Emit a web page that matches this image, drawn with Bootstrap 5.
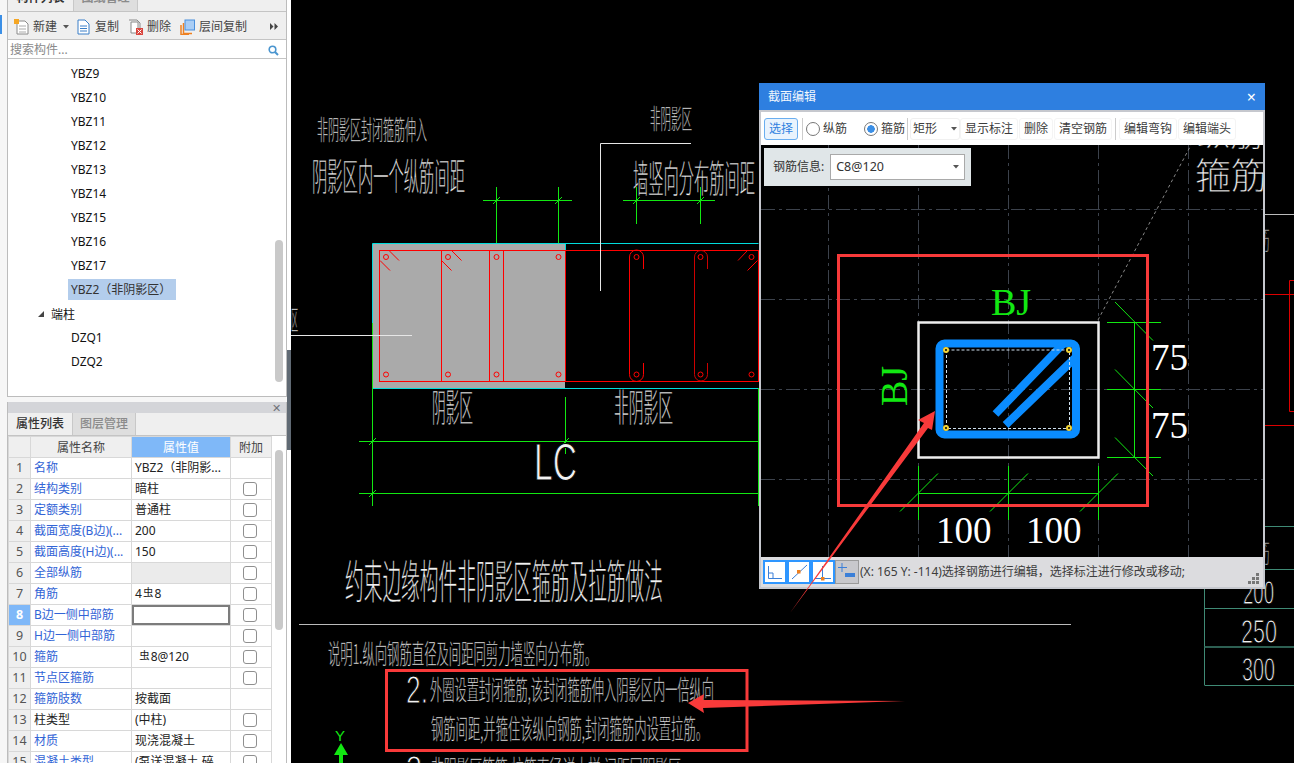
<!DOCTYPE html>
<html lang="zh-CN">
<head>
  <meta charset="UTF-8" />
  <meta name="viewport" content="width=device-width, initial-scale=1" />
  <title>截面编辑</title>
  <link href="https://cdn.jsdelivr.net/npm/bootstrap@5.3.2/dist/css/bootstrap.min.css" rel="stylesheet" />
  <style>
    html, body { height: 763px; overflow: hidden; }
    body { background: #000; font-family: "Noto Sans", "Noto Sans CJK SC", sans-serif; font-size: 12px; color: #222; }
    .app-shell { width: 1294px; height: 763px; position: relative; overflow: hidden; }
    .side-bar { width: 291px; height: 763px; flex: none; background: #f6f6f6; padding-left: 7px; position: relative; }
    .edge-mark { position: absolute; left: 0; top: 15px; width: 2px; height: 19px; background: #3b8fe6; }
    .side-inner { width: 280px; flex: none; }
    .split-bar { width: 4px; flex: none; background: #fff; position: relative; }
    .split-bar::after { content: ""; position: absolute; left: 0; top: 350px; width: 4px; height: 100px; background: #606a74; }

    .panel-top { height: 397px; border: 1px solid #bcbcbc; border-top: 0; background: #fff; }
    .tab-strip { height: 12px; overflow: hidden; background: #efefef; border-bottom: 1px solid #c4c4c4; align-items: flex-end; }
    .tab-item { width: 65px; height: 22px; flex: none; line-height: 18px; text-align: center; font-weight: 700; color: #333; background: #efefef; }
    .tab-item.off { background: #dedede; color: #8b8b8b; border-left: 1px solid #c8c8c8; border-right: 1px solid #c8c8c8; }
    .tool-strip { height: 28px; background: #efefef; border-bottom: 1px solid #c4c4c4; padding: 2px 0 0 6px; color: #444; }
    .tool-strip svg { flex: none; }
    .tool-strip .gap-a { margin-left: 4px; }
    .tool-strip .gap-b { margin-left: 9px; }
    .tool-strip .gap-c { margin-left: 6px; }
    .tool-strip .gap-d { margin-left: 8px; }
    .tool-strip .gap-e { margin-left: 5px; }
    .search-row { height: 19px; border-bottom: 1px solid #c4c4c4; padding: 2px 7px 0 2px; color: #8a8a8a; }
    .tree-box { position: relative; height: 337px; padding-top: 3px; }
    .tree-row { height: 24px; line-height: 24px; padding-left: 60px; color: #111; }
    .tree-row.group { padding-left: 30px; display: flex; align-items: center; }
    .tree-row span { display: inline-block; height: 21px; line-height: 21px; padding: 0 3px; }
    .tree-row.picked span { background: #b3cdec; color: #333; padding-right: 5px; }
    .tree-row .tree-arrow { width: 0; height: 0; padding: 0; border-style: solid; border-width: 0 0 6px 6px; border-color: transparent transparent #444 transparent; margin-right: 4px; }
    .scroll-thumb { position: absolute; width: 8px; background: #c9c9c9; border-radius: 4px; }

    .panel-bottom { height: 361px; margin-top: 5px; border-left: 1px solid #bcbcbc; border-right: 1px solid #bcbcbc; background: #fff; overflow: hidden; position: relative; }
    .grip-bar { height: 11px; background: #d4d5d9; padding-right: 5px; color: #6f7278; font-size: 11px; line-height: 11px; }
    .prop-tabs { height: 23px; background: #efefef; border-bottom: 1px solid #c4c4c4; }
    .prop-tabs .tab-item { height: 22px; line-height: 22px; width: 64px; font-weight: 500; }
    .prop-table { width: 263px; table-layout: fixed; margin: 0; border-collapse: collapse; }
    .prop-table th, .prop-table td { height: 21px; padding: 0 3px; line-height: 19px; font-size: 12px; font-weight: 400; border: 1px solid #d8d8d8; white-space: nowrap; overflow: hidden; color: #222; background: #fff; box-shadow: none; }
    .prop-table th { background: #efefef; text-align: center; color: #444; }
    .prop-table th.hot { background: #7fb8f8; color: #fff; }
    .prop-table .idx { background: #efefef; color: #555; text-align: center; padding: 0; font-size: 12.5px; }
    .prop-table .idx.hot { background: #7fb8f8; color: #fff; font-weight: 700; }
    .prop-table .nm { color: #3264d6; }
    .prop-table .nm.plain { color: #222; }
    .prop-table .val.muted-cell { background: #ebebeb; }
    .prop-table .val.sel-cell { box-shadow: inset 0 0 0 2px #7c7c7c; }
    .prop-table .chk { text-align: center; padding: 0 2px 0 0; }
    .tiny-check { width: 14px; height: 14px; margin: 3px 0 0; border: 1px solid #8f8f8f; border-radius: 2px; float: none; }
    .bar-mark { font-size: 10.5px; position: relative; top: -2px; margin: 0 1px; }

    .cad-view { position: absolute; left: 291px; top: 0; }
    .cad-t { fill: #f2f2f2; font-family: "Noto Sans CJK SC", sans-serif; font-weight: 300; stroke: #000; stroke-width: .35; }
    .cad-n { fill: #f2f2f2; font-family: "Liberation Sans", sans-serif; stroke: #000; stroke-width: 1.1; }
    .dim-t { font-family: "Liberation Serif", serif; }

    .edit-win { position: absolute; left: 759px; top: 83px; width: 506px; height: 506px; background: #c6c8ce; padding: 0 2px 2px 2px; }
    .win-title { height: 27px; flex: none; margin: 0 -2px; background: #2e7fe0; color: #f2f7fd; padding: 1px 9px 0; font-size: 12px; }
    .win-close { color: #fff; font-size: 16px; line-height: 1; }
    .win-tools { height: 33px; flex: none; margin-top: 2px; background: #fff; padding: 1px 0 0 3px; color: #3c3c3c; }
    .tool-pick { height: 22px; width: 34px; padding: 0; font-size: 12px; line-height: 20px; color: #2e7fe0; background: #e9f3fd; border: 1px solid #6aaef0; border-radius: 3px; }
    .tool-plain { height: 22px; padding: 0 4px; font-size: 12px; line-height: 20px; color: #3c3c3c; border: 1px solid #f4f4f4; border-radius: 3px; background: #fff; }
    .tool-sep { width: 1px; height: 22px; background: #ccc; flex: none; }
    .tool-radio { width: 14px; height: 14px; margin: 0 3px 0 0; border-color: #777; float: none; flex: none; }
    .tool-radio:checked { background-color: #fff; border-color: #777; background-image: radial-gradient(circle, #3b8fe6 0 3.5px, transparent 4px); }
    .form-select.shape-pick, .form-select.rebar-pick { background-image: url("data:image/svg+xml,%3csvg xmlns='http://www.w3.org/2000/svg' viewBox='0 0 6 4'%3e%3cpath d='M0 0h6L3 3.500z' fill='%23555'/%3e%3c/svg%3e"); background-size: 6px 4px; }
    .shape-pick { width: 50px; height: 22px; flex: none; padding: 0 0 0 2px; font-size: 12px; border: 1px solid #f0f0f0; background-position: right 2px center; color: #3c3c3c; border-radius: 3px; }
    .win-canvas { position: relative; height: 412px; flex: none; background: #000; overflow: hidden; }
    .win-canvas svg { display: block; }
    .rebar-box { position: absolute; left: 3px; top: 3px; width: 207px; height: 38px; background: #e0e6e8; padding-left: 9px; color: #333; }
    .rebar-pick { width: 135px; height: 26px; margin-left: 6px; padding: 0 0 0 5px; border: 1px solid #a9a9a9; border-radius: 0; font-size: 12.5px; background-position: right 5px center; color: #333; }
    .win-status { height: 30px; flex: none; background: #dcdcdf; padding-left: 2px; color: #3d3d3d; position: relative; white-space: nowrap; }
    .stat-btn { width: 24px; height: 24px; background: #fff; border: 2px solid #2e96ff; flex: none; display: flex; }
    .stat-btn.off { background: #c8c8cc; border: 1px solid #9a9a9a; }
    .grip-dots { position: absolute; right: 3px; bottom: 2px; }
    .mark-layer { position: absolute; left: 0; top: 0; pointer-events: none; }
  </style>
</head>
<body>
  <div class="app-shell d-flex">
    <div class="side-bar d-flex">
      <div class="edge-mark"></div>
      <div class="side-inner">
        <div class="panel-top">
          <div class="tab-strip d-flex">
            <div class="tab-item">构件列表</div>
            <div class="tab-item off">图纸管理</div>
          </div>
          <div class="tool-strip d-flex align-items-center">
            <svg width="15" height="16" viewBox="0 0 15 16"><path d="M3 2h8l3 3v10H3z" fill="#fff" stroke="#8a8a8a"/><path d="M5 7h7M5 10h7M5 13h7" stroke="#aaa"/><rect x="0" y="0" width="5" height="5" fill="#f5a623"/></svg>
            <span class="gap-a">新建</span>
            <svg class="gap-c" width="6" height="4" viewBox="0 0 6 4"><path d="M0 0h6L3 3.500z" fill="#555"/></svg>
            <svg class="gap-d" width="13" height="16" viewBox="0 0 13 16"><path d="M1 1h7l4 4v10H1z" fill="#fff" stroke="#3a7fc8"/><path d="M3 7h7M3 9.500h7M3 12h7" stroke="#3a7fc8"/></svg>
            <span class="gap-e">复制</span>
            <svg class="gap-b" width="15" height="16" viewBox="0 0 15 16"><path d="M1 1h8l3 3v8" fill="none" stroke="#8a8a8a"/><path d="M3 3h7v11H3z" fill="#fff" stroke="#8a8a8a"/><rect x="8" y="9" width="7" height="7" fill="#d9453d"/><path d="M9.500 10.500l4 4m0-4l-4 4" stroke="#fff"/></svg>
            <span class="gap-a">删除</span>
            <svg class="gap-b" width="15" height="16" viewBox="0 0 15 16"><path d="M3.500 4v10.500H12M1 6v9.500h8" fill="none" stroke="#ee8020" stroke-width="1.500"/><rect x="5" y="1" width="9.500" height="10" fill="#a9cdf5" stroke="#4a8fdc"/></svg>
            <span class="gap-a">层间复制</span>
            <svg class="ms-auto me-2" width="8" height="7" viewBox="0 0 8 7"><path d="M0 0l3.500 3.500L0 7zM4.500 0L8 3.500 4.500 7z" fill="#444"/></svg>
          </div>
          <div class="search-row d-flex align-items-center justify-content-between">
            <span>搜索构件...</span>
            <svg width="11" height="11" viewBox="0 0 11 11"><circle cx="4.500" cy="4.500" r="3.300" fill="none" stroke="#4a95cf" stroke-width="1.600"/><path d="M7 7l3 3" stroke="#4a95cf" stroke-width="2"/></svg>
          </div>
          <div class="tree-box">
            <div id="listaArvore"></div>
            <div class="scroll-thumb" style="left:267px;top:181px;height:142px"></div>
          </div>
        </div>
        <div class="panel-bottom">
          <div class="grip-bar d-flex justify-content-end align-items-center">✕</div>
          <div class="prop-tabs d-flex">
            <div class="tab-item">属性列表</div>
            <div class="tab-item off">图层管理</div>
          </div>
          <table class="table prop-table">
            <colgroup><col style="width:22px"><col style="width:101px"><col style="width:99px"><col style="width:41px"></colgroup>
            <thead>
              <tr><th></th><th>属性名称</th><th class="hot">属性值</th><th>附加</th></tr>
            </thead>
            <tbody id="tabelaProps"></tbody>
          </table>
          <div class="scroll-thumb" style="left:267px;top:48px;height:180px"></div>
        </div>
      </div>
      <div class="split-bar"></div>
    </div>
  </div>

  <svg class="cad-view" width="1003" height="763" viewBox="291 0 1003 763">
    <!-- detail -->
    <rect x="373" y="244" width="192" height="144" fill="#aaa"/>
    <g stroke="#0dd" stroke-width="1" fill="none">
      <path d="M372.500 243.500H758.500M372.500 388.500H758.500M372.500 243.500V323M565.500 243.500V250"/>
    </g>
    <g stroke="#f00" stroke-width="1" fill="none">
      <rect x="379.500" y="250.500" width="379" height="131"/>
      <path d="M441.500 250.500v131M489.500 250.500v131M503.500 250.500v131M565.500 250.500v131"/>
      <path d="M389 250.500l10 10M380 260.500l10 10M451.500 250.500l10 10M441.500 260.500l10 10M747.500 250.500l-9.500 10M757.500 260.500l-10 10"/>
      <circle cx="386" cy="257" r="2.500"/><circle cx="448" cy="257" r="2.500"/><circle cx="496.500" cy="257" r="2.500"/><circle cx="558.500" cy="257" r="2.500"/>
      <circle cx="386" cy="374.500" r="2.500"/><circle cx="448" cy="374.500" r="2.500"/><circle cx="496.500" cy="374.500" r="2.500"/><circle cx="558.500" cy="374.500" r="2.500"/>
      <circle cx="636.500" cy="257" r="2.500"/><circle cx="700.500" cy="257" r="2.500"/><circle cx="751.500" cy="257" r="2.500"/>
      <circle cx="636.500" cy="374.500" r="2.500"/><circle cx="700.500" cy="374.500" r="2.500"/><circle cx="751.500" cy="374.500" r="2.500"/>
      <path d="M629.500 374.500V257a7 7 0 0 1 14 0v12M643.500 363v11.500a7 7 0 0 1-14 0"/>
      <path d="M694.500 374.500V257a6.500 6.500 0 0 1 13 0v12M707.500 363v11.500a6.500 6.500 0 0 1-13 0" stroke="#c00"/>
    </g>
    <g stroke="#12e812" stroke-width="1" fill="none">
      <path d="M483 200.500H572M496.500 187V243M558.500 187V243M623 200.500H715M636.500 187V224M700.500 187V224"/>
      <path d="M493 204l7-7M555 204l7-7M633 204l7-7M697 204l7-7"/>
      <path d="M372.500 323V506M565.500 397V454M758.500 388V506M359 441.500H760M359 493.500H760"/>
      <path d="M369 445l7-7M562 445l7-7M369 497l7-7"/>
    </g>
    <path d="M691 143.500H600.500V291M291 335.500H412" stroke="#e6e6e6" stroke-width="1" fill="none"/>
    <path d="M299 624.500H1071" stroke="#bbb" stroke-width="1"/>
    <text class="cad-t" x="317" y="140" font-size="27" textLength="110" lengthAdjust="spacingAndGlyphs">非阴影区封闭箍筋伸入</text>
    <text class="cad-t" x="312" y="190" font-size="38" textLength="153" lengthAdjust="spacingAndGlyphs">阴影区内一个纵筋间距</text>
    <text class="cad-t" x="650" y="129" font-size="27" textLength="42" lengthAdjust="spacingAndGlyphs">非阴影区</text>
    <text class="cad-t" x="633" y="192" font-size="38" textLength="122" lengthAdjust="spacingAndGlyphs">墙竖向分布筋间距</text>
    <text class="cad-t" x="432" y="421" font-size="38" textLength="41" lengthAdjust="spacingAndGlyphs">阴影区</text>
    <text class="cad-t" x="614" y="421" font-size="38" textLength="59" lengthAdjust="spacingAndGlyphs">非阴影区</text>
    <text class="cad-n" x="534" y="480" font-size="52" textLength="43" lengthAdjust="spacingAndGlyphs">LC</text>
    <text class="cad-t" x="345" y="598" font-size="46" textLength="318" lengthAdjust="spacingAndGlyphs">约束边缘构件非阴影区箍筋及拉筋做法</text>
    <text class="cad-t" x="328" y="664" font-size="27" textLength="269" lengthAdjust="spacingAndGlyphs">说明1.纵向钢筋直径及间距同剪力墙竖向分布筋。</text>
    <text class="cad-n" x="406" y="703" font-size="38" textLength="22" lengthAdjust="spacingAndGlyphs">2.</text>
    <text class="cad-t" x="430" y="700" font-size="27" textLength="284" lengthAdjust="spacingAndGlyphs">外圈设置封闭箍筋,该封闭箍筋伸入阴影区内一倍纵向</text>
    <text class="cad-t" x="431" y="739" font-size="27" textLength="277" lengthAdjust="spacingAndGlyphs">钢筋间距,并箍住该纵向钢筋,封闭箍筋内设置拉筋。</text>
    <text class="cad-n" x="406" y="783" font-size="38" textLength="16" lengthAdjust="spacingAndGlyphs">3</text>
    <text class="cad-t" x="431" y="780" font-size="27" textLength="250" lengthAdjust="spacingAndGlyphs">非阴影区箍筋,拉筋直径详大样,间距同阴影区</text>
    <text class="cad-t" x="291" y="330" font-size="27" textLength="7" lengthAdjust="spacingAndGlyphs">区</text>
    <!-- eixo Y -->
    <text x="335" y="741" font-size="15" fill="#12e812" font-family="Liberation Sans, sans-serif">Y</text>
    <path d="M341 743l7 12h-5v8h-4v-8h-5z" fill="#12e812"/>
    <!-- direita -->
    <g fill="none" stroke-width="1">
      <path d="M1265 214.500H1294" stroke="#bbb"/>
      <path d="M1265 294.500H1294M1265 425.500H1294M1294 280.500H1289.500V411.500H1294" stroke="#d00"/>
      <path d="M1265 526.500H1294M1265 569.500H1294M1204.500 608.500H1294M1204.500 685.500H1294M1204.500 585V685" stroke="#3f8a75"/>
      <path d="M1204.500 647H1294" stroke="#2d5f52" stroke-width="2"/>
    </g>
    <text class="cad-t" x="1255" y="250" font-size="27" textLength="15" lengthAdjust="spacingAndGlyphs" fill-opacity=".7">筋</text>
    <text class="cad-t" x="1255" y="563" font-size="27" textLength="15" lengthAdjust="spacingAndGlyphs" fill-opacity=".7">筋</text>
    <text class="cad-n" x="1243" y="604" font-size="34" textLength="31" lengthAdjust="spacingAndGlyphs">200</text>
    <text class="cad-n" x="1241" y="643" font-size="34" textLength="36" lengthAdjust="spacingAndGlyphs">250</text>
    <text class="cad-n" x="1242" y="681" font-size="34" textLength="33" lengthAdjust="spacingAndGlyphs">300</text>
  </svg>

  <div class="edit-win d-flex flex-column">
    <div class="win-title d-flex align-items-center justify-content-between">
      <span>截面编辑</span>
      <span class="win-close">×</span>
    </div>
    <div class="win-tools d-flex align-items-center">
      <button type="button" class="btn tool-pick">选择</button>
      <span class="tool-sep ms-1"></span>
      <div class="d-flex align-items-center" style="margin-left:3px;width:58px">
        <input class="form-check-input tool-radio" type="radio" name="modoBarra"><span>纵筋</span>
      </div>
      <div class="d-flex align-items-center">
        <input class="form-check-input tool-radio" type="radio" name="modoBarra" checked><span>箍筋</span>
      </div>
      <span class="tool-sep" style="margin-left:2px"></span>
      <select class="form-select shape-pick" style="margin-left:2px"><option>矩形</option></select>
      <button type="button" class="btn tool-plain">显示标注</button>
      <button type="button" class="btn tool-plain" style="margin-left:1px">删除</button>
      <button type="button" class="btn tool-plain" style="margin-left:1px">清空钢筋</button>
      <span class="tool-sep" style="margin-left:3px"></span>
      <button type="button" class="btn tool-plain" style="margin-left:3px">编辑弯钩</button>
      <button type="button" class="btn tool-plain" style="margin-left:1px">编辑端头</button>
    </div>
    <div class="win-canvas">
      <svg width="502" height="412" viewBox="761 145 502 412">
        <g stroke="#3c424c" stroke-width="1" stroke-dasharray="14 4 3 4" fill="none">
          <path d="M828.500 145V557M918.500 145V557M1008.500 145V557M1098.500 145V557M1188.500 145V557"/>
          <path d="M761 209.500H1263M761 299.500H1263M761 389.500H1263M761 479.500H1263"/>
        </g>
        <path d="M1098 320L1191 145" stroke="#888" stroke-width="1" stroke-dasharray="3 3" fill="none"/>
        <text class="cad-t" x="1195" y="189" font-size="36" textLength="72" lengthAdjust="spacingAndGlyphs">箍筋</text>
        <text class="cad-t" x="1197" y="146" font-size="30" textLength="66" lengthAdjust="spacingAndGlyphs">纵筋</text>
        <rect x="918.500" y="322.500" width="180" height="135" fill="none" stroke="#eee" stroke-width="2.500"/>
        <rect x="939.500" y="343.500" width="136.500" height="91" rx="5" fill="none" stroke="#0a8cff" stroke-width="8"/>
        <path d="M1063 344L995.500 414M1076 357L1005.500 425" stroke="#0a8cff" stroke-width="8" fill="none"/>
        <rect x="946.500" y="350" width="123" height="78.500" fill="none" stroke="#cfe0ee" stroke-dasharray="3 2"/>
        <g fill="#000" stroke="#f2d335" stroke-width="2">
          <circle cx="946" cy="350" r="2"/><circle cx="1069" cy="350" r="2"/><circle cx="946" cy="428" r="2"/><circle cx="1069" cy="428" r="2"/>
        </g>
        <g stroke="#12e812" stroke-width="1" fill="none">
          <path d="M1134.500 322V457M1107 322.500H1161M1107 389.500H1161M1107 457.500H1161"/>
          <path d="M1115 302l38 38.500M1115 369.500l38 38.500M1115 437.500l38 38.500"/>
          <path d="M918 493.500H1098M918.500 466V520M1008.500 466V520M1098.500 466V520"/>
          <path d="M900 511.500l38-38M990 511.500l38-38M1080 511.500l38-38"/>
        </g>
        <text class="dim-t" x="991" y="315" font-size="38" fill="#12e812">BJ</text>
        <text class="dim-t" font-size="38" fill="#12e812" transform="translate(907 406) rotate(-90)">BJ</text>
        <g class="dim-t" font-size="37" fill="#fff">
          <text x="1151" y="370">75</text>
          <text x="1151" y="438">75</text>
          <text x="936" y="543">100</text>
          <text x="1026" y="543">100</text>
        </g>
      </svg>
      <div class="rebar-box d-flex align-items-center">
        <span>钢筋信息:</span>
        <select class="form-select rebar-pick"><option>C8@120</option></select>
      </div>
    </div>
    <div class="win-status d-flex align-items-center">
      <span class="stat-btn"><svg width="20" height="20" viewBox="0 0 20 20"><path d="M3.500 4v12.500H17M3.500 11H8v5.500" fill="none" stroke="#3a7fd8"/></svg></span>
      <span class="stat-btn"><svg width="20" height="20" viewBox="0 0 20 20"><path d="M3 17L18 3" stroke="#3a7fd8"/><rect x="8" y="8" width="3.500" height="3.500" fill="#ee8020"/></svg></span>
      <span class="stat-btn"><svg width="20" height="20" viewBox="0 0 20 20"><path d="M2 16.500h16M9.500 4v12" stroke="#3a7fd8"/><rect x="8" y="15" width="3.500" height="3.500" fill="#ee8020"/></svg></span>
      <span class="stat-btn off"><svg width="22" height="22" viewBox="0 0 22 22"><path d="M6 2v9M2 6.500h9" stroke="#3a7fd8"/><rect x="9" y="12" width="10" height="4" fill="#3a7fd8"/></svg></span>
      <span style="margin-left:1px">(X: 165 Y: -114)选择钢筋进行编辑，选择标注进行修改或移动;</span>
      <svg class="grip-dots" width="12" height="12" viewBox="0 0 12 12"><path d="M8 0h3v3H8zM4 4h3v3H4zM8 4h3v3H8zM0 8h3v3H0zM4 8h3v3H4zM8 8h3v3H8z" fill="#777"/></svg>
    </div>
  </div>

  <svg class="mark-layer" width="1294" height="763" viewBox="0 0 1294 763">
    <rect x="838.500" y="255.500" width="309" height="250" fill="none" stroke="#f83a3a" stroke-width="3"/>
    <rect x="386.500" y="670.500" width="360.500" height="80" fill="none" stroke="#f83a3a" stroke-width="3"/>
    <path d="M935 411L918 420L924 423L790 613L928 428L932 430z" fill="#f83a3a"/>
    <path d="M688 703L704 694L703 700L905 701L703 708L704 713z" fill="#f83a3a"/>
  </svg>

  <script src="https://cdn.jsdelivr.net/npm/bootstrap@5.3.2/dist/js/bootstrap.bundle.min.js"></script>
  <script>
    const arvore = ["YBZ9", "YBZ10", "YBZ11", "YBZ12", "YBZ13", "YBZ14", "YBZ15", "YBZ16", "YBZ17", "YBZ2（非阴影区）", "#端柱", "DZQ1", "DZQ2"];
    document.getElementById("listaArvore").innerHTML = arvore.map(item => {
      if (item[0] === "#") {
        return `<div class="tree-row group"><span class="tree-arrow"></span><span>${item.slice(1)}</span></div>`;
      }
      return `<div class="tree-row ${item.includes("非") ? "picked" : ""}"><span>${item}</span></div>`;
    }).join("");

    const marca = '<span class="bar-mark">虫</span>';
    // nome, valor, tem checkbox, classe extra
    const props = [
      ["名称", "YBZ2（非阴影...", false],
      ["结构类别", "暗柱", true],
      ["定额类别", "普通柱", true],
      ["截面宽度(B边)(...", "200", true],
      ["截面高度(H边)(...", "150", true],
      ["全部纵筋", "", true, "muted-cell"],
      ["角筋", `4${marca}8`, true],
      ["B边一侧中部筋", "", true, "sel-cell"],
      ["H边一侧中部筋", "", true],
      ["箍筋", `&nbsp;${marca}8@120`, true],
      ["节点区箍筋", "", true],
      ["箍筋肢数", "按截面", false],
      ["柱类型", "(中柱)", true, "", true],
      ["材质", "现浇混凝土", true],
      ["混凝土类型", "(泵送混凝土 碎...", true]
    ];
    document.getElementById("tabelaProps").innerHTML = props.map((p, i) => `
      <tr>
        <td class="idx ${i === 7 ? "hot" : ""}">${i + 1}</td>
        <td class="nm ${p[4] ? "plain" : ""}">${p[0]}</td>
        <td class="val ${p[3] || ""}">${p[1]}</td>
        <td class="chk">${p[2] ? '<input class="form-check-input tiny-check" type="checkbox">' : ""}</td>
      </tr>`).join("");
  </script>
</body>
</html>
